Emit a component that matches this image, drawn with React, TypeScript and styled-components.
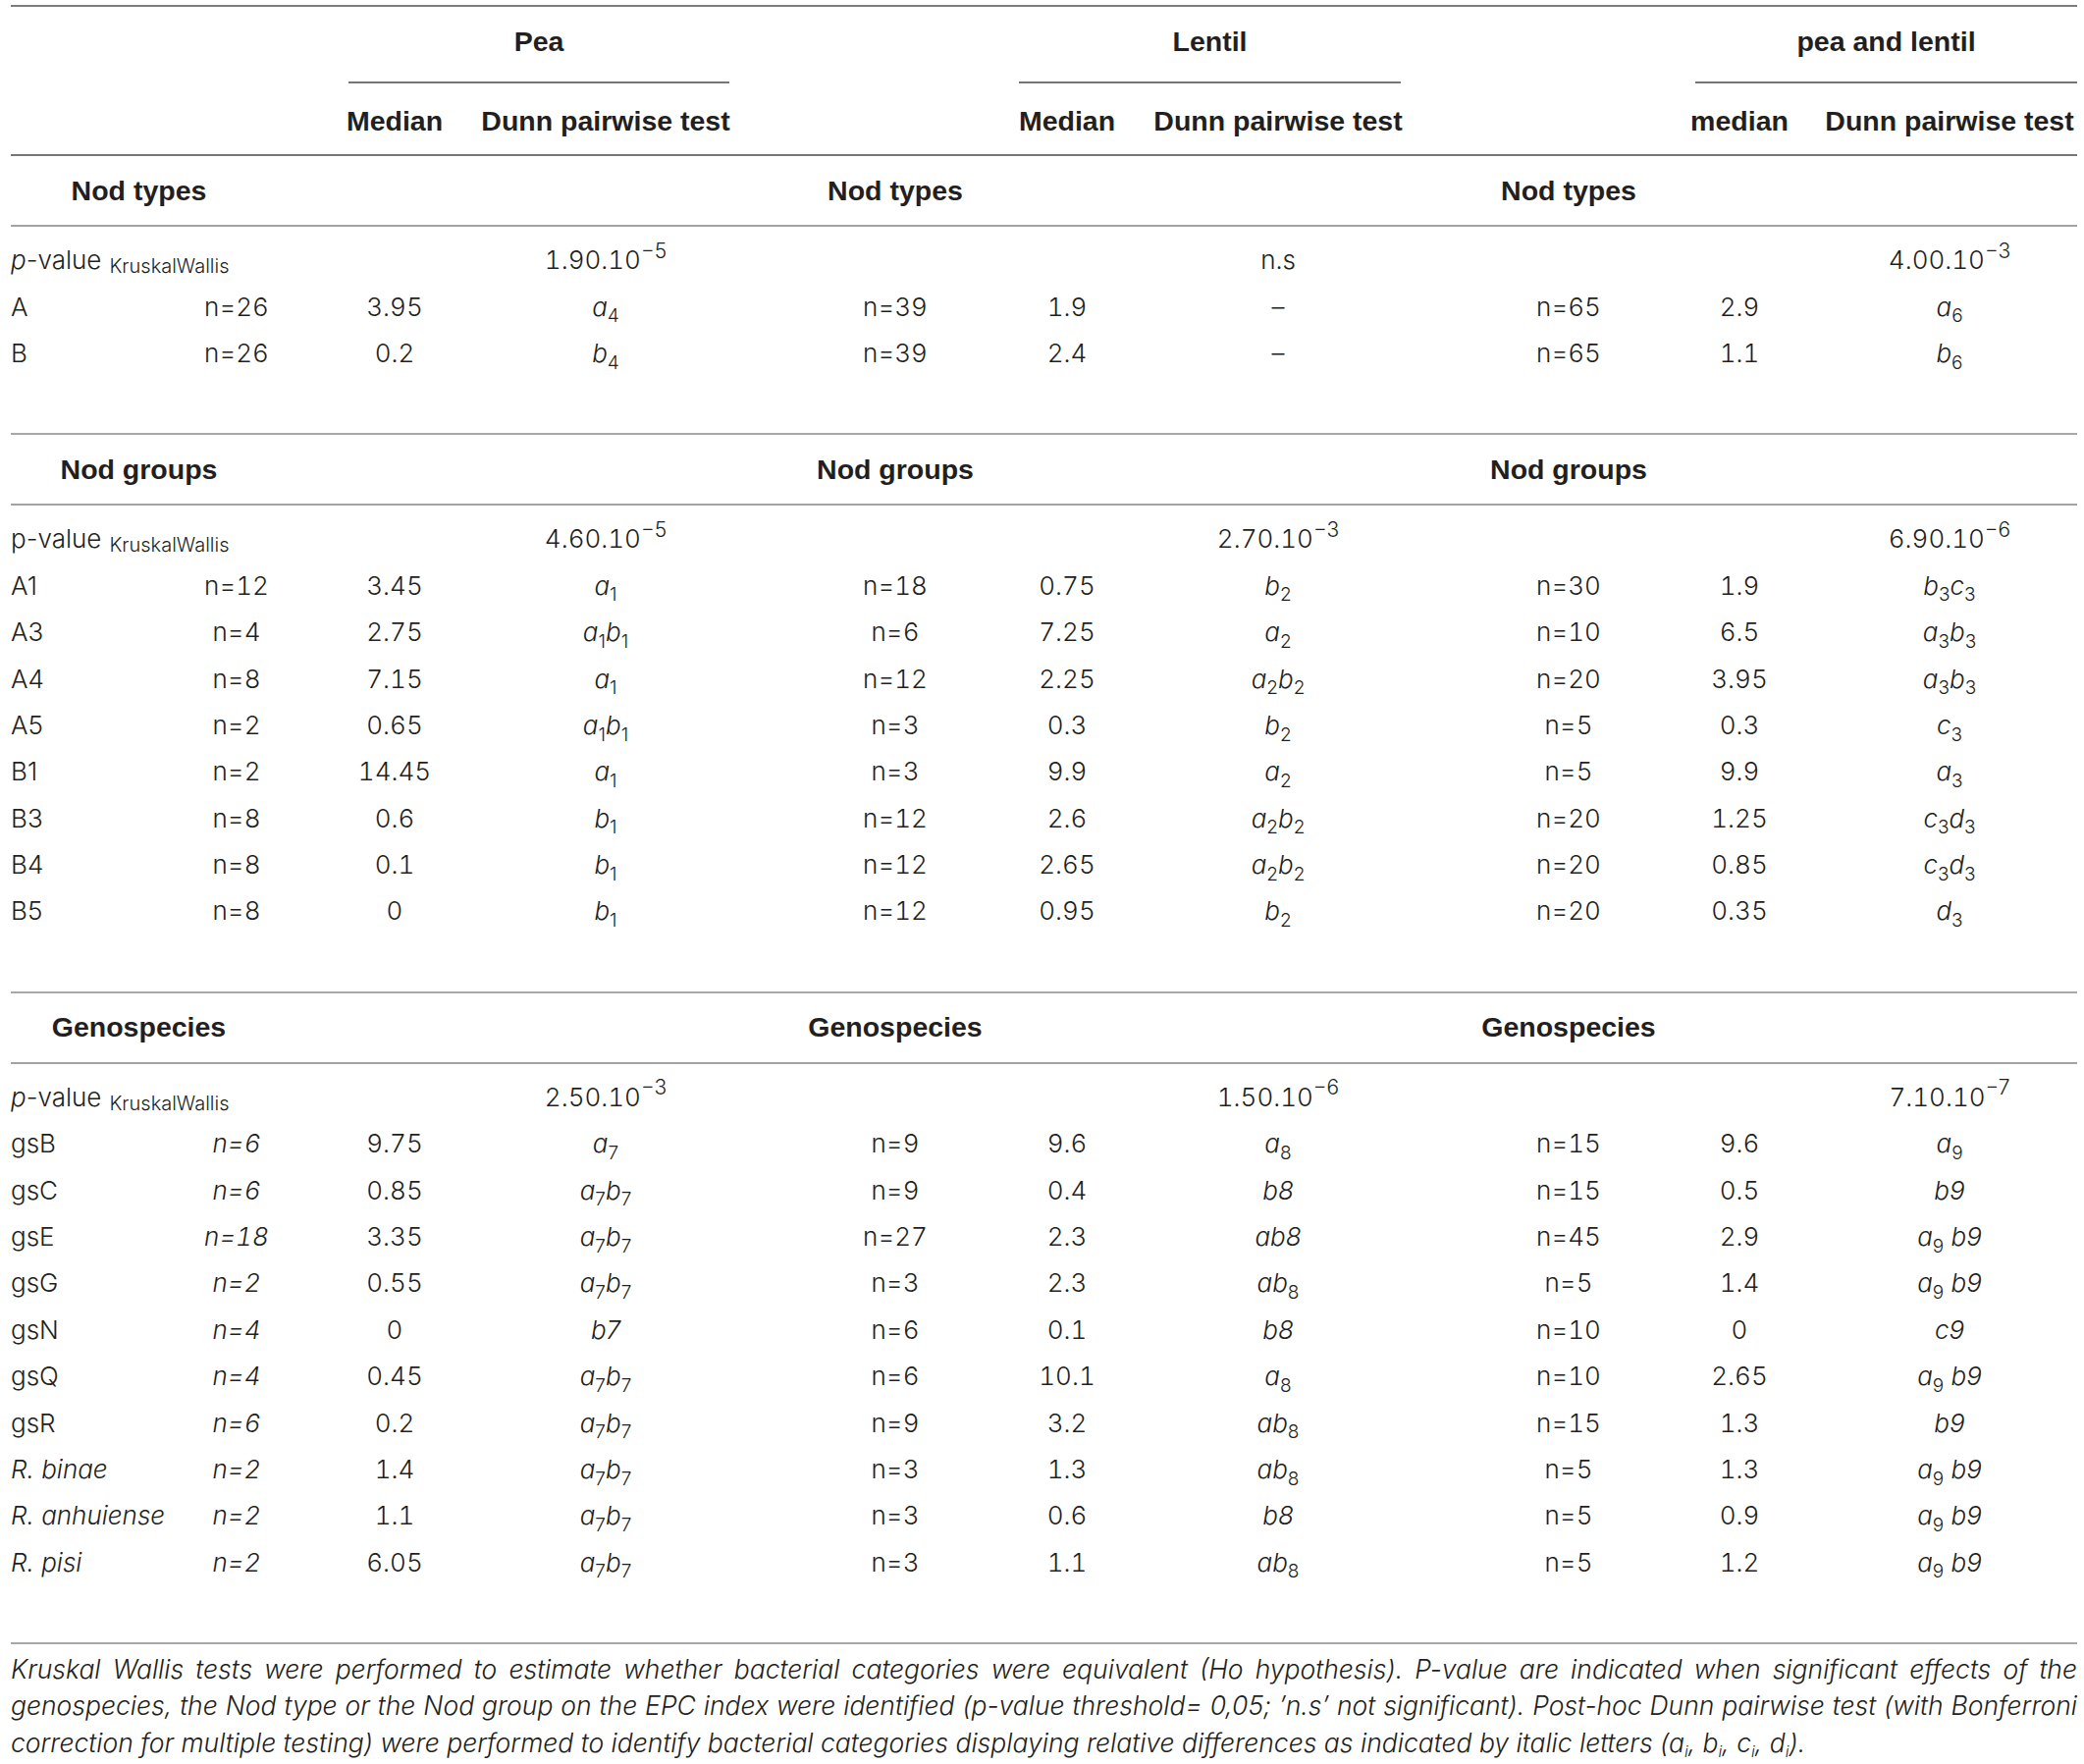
import React from "react";
import styled, { createGlobalStyle } from "styled-components";

const GlobalStyle = createGlobalStyle`
  html, body { margin: 0; padding: 0; background: #ffffff; }
  body {
    font-family: Inter, "Liberation Sans", Arial, sans-serif;
    color: #231f20;
  }
  *, *::before, *::after { box-sizing: border-box; }
`;

const COLS = "119px 222px 100px 330px 260px 90px 340px 252px 96px 36px 260px";

const Page = styled.div`
  width: 2123px;
  padding: 5px 7px 0 11px;
`;

const Table = styled.div`
  display: flex;
  flex-direction: column;
  border-top: 2px solid #7d7d7d;
`;

const Grid = styled.div`
  display: grid;
  grid-template-columns: ${COLS};
  grid-template-rows: 100%;
`;

const GroupRow = styled(Grid)`
  height: 78px;
`;

const GroupCell = styled.div<{ $start: number; $span: number; $ml: number; $mr: number }>`
  grid-column: ${(p) => p.$start} / span ${(p) => p.$span};
  grid-row: 1;
  margin: 0 ${(p) => p.$mr}px 0 ${(p) => p.$ml}px;
  border-bottom: 2px solid #767676;
  display: flex;
  align-items: center;
  justify-content: center;
  padding-bottom: 6px;
  font-family: "Liberation Sans", Arial, sans-serif;
  font-weight: 700;
  font-size: 28.5px;
  white-space: nowrap;
`;

const SubHeaderRow = styled(Grid)`
  height: 74px;
  padding-top: 4px;
  align-items: center;
  border-bottom: 2px solid #767676;
`;

const HeadCell = styled.div<{ $col: number }>`
  grid-column: ${(p) => p.$col};
  grid-row: 1;
  display: flex;
  justify-content: center;
  font-family: "Liberation Sans", Arial, sans-serif;
  font-weight: 700;
  font-size: 28.5px;
  white-space: nowrap;
`;

const SectionHeader = styled(Grid)`
  height: 72px;
  align-items: center;
  border-bottom: 2px solid #a3a3a3;
`;

const SectionTitle = styled.div<{ $col: number; $span: number; $pr: number }>`
  grid-column: ${(p) => p.$col} / span ${(p) => p.$span};
  grid-row: 1;
  padding-right: ${(p) => p.$pr}px;
  display: flex;
  justify-content: center;
  font-family: "Liberation Sans", Arial, sans-serif;
  font-weight: 700;
  font-size: 28.5px;
  white-space: nowrap;
`;

const DataBlock = styled.div`
  padding: 10px 0 58px;
  border-bottom: 2px solid #a8a8a8;
`;

const DataRow = styled(Grid)`
  height: 47.4px;
  align-items: center;
`;

const Cell = styled.div<{ $col: number; $italic?: boolean }>`
  grid-column: ${(p) => p.$col};
  grid-row: 1;
  display: flex;
  justify-content: center;
  align-items: baseline;
  font-size: 26px;
  font-weight: 300;
  font-style: ${(p) => (p.$italic ? "italic" : "normal")};
  white-space: nowrap;
`;

const Num = styled.span`
  font-variant-numeric: tabular-nums;
`;

const LabelCell = styled.div<{ $italic?: boolean; $span?: number }>`
  grid-column: 1 / span ${(p) => p.$span ?? 1};
  grid-row: 1;
  display: flex;
  align-items: baseline;
  font-size: 26px;
  font-weight: 300;
  font-style: ${(p) => (p.$italic ? "italic" : "normal")};
  white-space: nowrap;
`;

const Em = styled.span`
  font-style: italic;
`;

const Sub = styled.span`
  font-style: normal;
  font-size: 19px;
  position: relative;
  top: 0.35em;
`;

const Sup = styled.span`
  font-size: 21px;
  position: relative;
  top: -0.55em;
`;

const KwSub = styled.span`
  font-size: 20px;
  margin-left: 8px;
  position: relative;
  top: 4px;
`;

const Caption = styled.div`
  padding-top: 7px;
  font-size: 26.5px;
  font-weight: 300;
  font-style: italic;
  line-height: 37.5px;
`;

const CaptionLine = styled.div<{ $last?: boolean }>`
  white-space: nowrap;
  text-align: ${(p) => (p.$last ? "left" : "justify")};
  text-align-last: ${(p) => (p.$last ? "left" : "justify")};
`;

const CapSub = styled.span`
  font-size: 16px;
  position: relative;
  top: 5px;
`;

type Group = [string, string, string];
type Row = { label: string; labelItalic?: boolean; nItalic?: boolean; groups: Group[] };
type Section = {
  title: string;
  pItalic: boolean;
  p: string[][];
  rows: Row[];
};

const sections: Section[] = [
  {
    title: "Nod types",
    pItalic: true,
    p: [["1.90.10", "−5"], ["n.s"], ["4.00.10", "−3"]],
    rows: [
      { label: "A", groups: [["n=26", "3.95", "a_4"], ["n=39", "1.9", "–"], ["n=65", "2.9", "a_6"]] },
      { label: "B", groups: [["n=26", "0.2", "b_4"], ["n=39", "2.4", "–"], ["n=65", "1.1", "b_6"]] },
    ],
  },
  {
    title: "Nod groups",
    pItalic: false,
    p: [["4.60.10", "−5"], ["2.70.10", "−3"], ["6.90.10", "−6"]],
    rows: [
      { label: "A1", groups: [["n=12", "3.45", "a_1"], ["n=18", "0.75", "b_2"], ["n=30", "1.9", "b_3c_3"]] },
      { label: "A3", groups: [["n=4", "2.75", "a_1b_1"], ["n=6", "7.25", "a_2"], ["n=10", "6.5", "a_3b_3"]] },
      { label: "A4", groups: [["n=8", "7.15", "a_1"], ["n=12", "2.25", "a_2b_2"], ["n=20", "3.95", "a_3b_3"]] },
      { label: "A5", groups: [["n=2", "0.65", "a_1b_1"], ["n=3", "0.3", "b_2"], ["n=5", "0.3", "c_3"]] },
      { label: "B1", groups: [["n=2", "14.45", "a_1"], ["n=3", "9.9", "a_2"], ["n=5", "9.9", "a_3"]] },
      { label: "B3", groups: [["n=8", "0.6", "b_1"], ["n=12", "2.6", "a_2b_2"], ["n=20", "1.25", "c_3d_3"]] },
      { label: "B4", groups: [["n=8", "0.1", "b_1"], ["n=12", "2.65", "a_2b_2"], ["n=20", "0.85", "c_3d_3"]] },
      { label: "B5", groups: [["n=8", "0", "b_1"], ["n=12", "0.95", "b_2"], ["n=20", "0.35", "d_3"]] },
    ],
  },
  {
    title: "Genospecies",
    pItalic: true,
    p: [["2.50.10", "−3"], ["1.50.10", "−6"], ["7.10.10", "−7"]],
    rows: [
      { label: "gsB", nItalic: true, groups: [["n=6", "9.75", "a_7"], ["n=9", "9.6", "a_8"], ["n=15", "9.6", "a_9"]] },
      { label: "gsC", nItalic: true, groups: [["n=6", "0.85", "a_7b_7"], ["n=9", "0.4", "b8"], ["n=15", "0.5", "b9"]] },
      { label: "gsE", nItalic: true, groups: [["n=18", "3.35", "a_7b_7"], ["n=27", "2.3", "ab8"], ["n=45", "2.9", "a_9 b9"]] },
      { label: "gsG", nItalic: true, groups: [["n=2", "0.55", "a_7b_7"], ["n=3", "2.3", "ab_8"], ["n=5", "1.4", "a_9 b9"]] },
      { label: "gsN", nItalic: true, groups: [["n=4", "0", "b7"], ["n=6", "0.1", "b8"], ["n=10", "0", "c9"]] },
      { label: "gsQ", nItalic: true, groups: [["n=4", "0.45", "a_7b_7"], ["n=6", "10.1", "a_8"], ["n=10", "2.65", "a_9 b9"]] },
      { label: "gsR", nItalic: true, groups: [["n=6", "0.2", "a_7b_7"], ["n=9", "3.2", "ab_8"], ["n=15", "1.3", "b9"]] },
      { label: "R. binae", labelItalic: true, nItalic: true, groups: [["n=2", "1.4", "a_7b_7"], ["n=3", "1.3", "ab_8"], ["n=5", "1.3", "a_9 b9"]] },
      { label: "R. anhuiense", labelItalic: true, nItalic: true, groups: [["n=2", "1.1", "a_7b_7"], ["n=3", "0.6", "b8"], ["n=5", "0.9", "a_9 b9"]] },
      { label: "R. pisi", labelItalic: true, nItalic: true, groups: [["n=2", "6.05", "a_7b_7"], ["n=3", "1.1", "ab_8"], ["n=5", "1.2", "a_9 b9"]] },
    ],
  },
];

const N_COLS = [2, 5, 8];
const MED_COLS = [3, 6, 9];
const DUNN_COLS = [4, 7, 11];

function Letters({ code }: { code: string }) {
  if (code === "–") return <span>–</span>;
  const parts: React.ReactNode[] = [];
  let buf = "";
  for (let i = 0; i < code.length; i++) {
    const ch = code[i];
    if (ch === "_") {
      if (buf) parts.push(buf);
      buf = "";
      parts.push(<Sub key={i}>{code[i + 1]}</Sub>);
      i++;
    } else {
      buf += ch;
    }
  }
  if (buf) parts.push(buf);
  return <Em>{parts}</Em>;
}

function PValue({ v }: { v: string[] }) {
  return (
    <span>
      <Num>{v[0]}</Num>
      {v[1] && <Sup>{v[1]}</Sup>}
    </span>
  );
}

function SectionView({ s }: { s: Section }) {
  return (
    <>
      <SectionHeader>
        <SectionTitle $col={1} $span={2} $pr={80}>{s.title}</SectionTitle>
        <SectionTitle $col={5} $span={1} $pr={0}>{s.title}</SectionTitle>
        <SectionTitle $col={8} $span={1} $pr={0}>{s.title}</SectionTitle>
      </SectionHeader>
      <DataBlock>
        <DataRow>
          <LabelCell $span={2}>
            {s.pItalic ? <Em>p</Em> : "p"}-value<KwSub>KruskalWallis</KwSub>
          </LabelCell>
          {s.p.map((v, g) => (
            <Cell key={g} $col={DUNN_COLS[g]}>
              <PValue v={v} />
            </Cell>
          ))}
        </DataRow>
        {s.rows.map((r) => (
          <DataRow key={r.label}>
            <LabelCell $italic={r.labelItalic}>{r.label}</LabelCell>
            {r.groups.map((gr, g) => (
              <React.Fragment key={g}>
                <Cell $col={N_COLS[g]} $italic={g === 0 && r.nItalic}>
                  <Num>{gr[0]}</Num>
                </Cell>
                <Cell $col={MED_COLS[g]}>
                  <Num>{gr[1]}</Num>
                </Cell>
                <Cell $col={DUNN_COLS[g]}>
                  <Letters code={gr[2]} />
                </Cell>
              </React.Fragment>
            ))}
          </DataRow>
        ))}
      </DataBlock>
    </>
  );
}

export default function App() {
  return (
    <>
      <GlobalStyle />
      <Page>
        <Table>
          <GroupRow>
            <GroupCell $start={3} $span={2} $ml={3} $mr={39}>Pea</GroupCell>
            <GroupCell $start={6} $span={2} $ml={-4} $mr={45}>Lentil</GroupCell>
            <GroupCell $start={9} $span={3} $ml={3} $mr={0}>pea and lentil</GroupCell>
          </GroupRow>
          <SubHeaderRow>
            <HeadCell $col={3}>Median</HeadCell>
            <HeadCell $col={4}>Dunn pairwise test</HeadCell>
            <HeadCell $col={6}>Median</HeadCell>
            <HeadCell $col={7}>Dunn pairwise test</HeadCell>
            <HeadCell $col={9}>median</HeadCell>
            <HeadCell $col={11}>Dunn pairwise test</HeadCell>
          </SubHeaderRow>
          {sections.map((s) => (
            <SectionView key={s.title} s={s} />
          ))}
        </Table>
        <Caption>
          <CaptionLine>
            Kruskal Wallis tests were performed to estimate whether bacterial categories were equivalent (Ho hypothesis). P-value are indicated when significant effects of the
          </CaptionLine>
          <CaptionLine>
            genospecies, the Nod type or the Nod group on the EPC index were identified (p-value threshold= 0,05; ’n.s’ not significant). Post-hoc Dunn pairwise test (with Bonferroni
          </CaptionLine>
          <CaptionLine $last>
            correction for multiple testing) were performed to identify bacterial categories displaying relative differences as indicated by italic letters (a<CapSub>i</CapSub>, b<CapSub>i</CapSub>, c<CapSub>i</CapSub>, d<CapSub>i</CapSub>).
          </CaptionLine>
        </Caption>
      </Page>
    </>
  );
}
